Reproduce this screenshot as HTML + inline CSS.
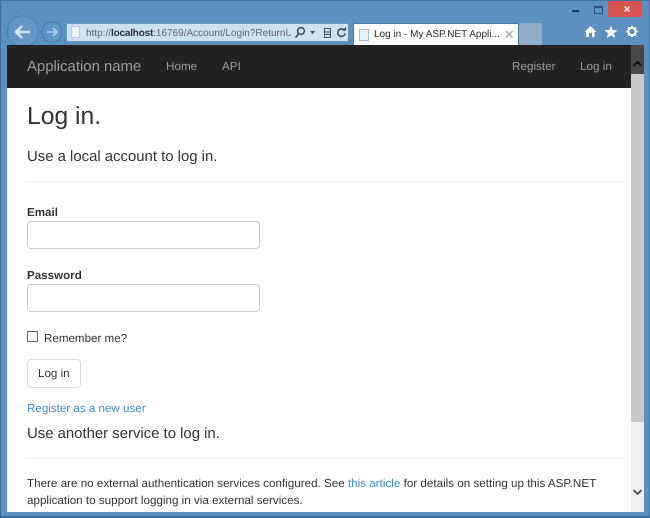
<!DOCTYPE html>
<html><head><meta charset="utf-8"><style>
html,body{margin:0;padding:0;background:#5b90bf}
body{width:650px;height:518px;overflow:hidden;position:relative;font-family:"Liberation Sans",sans-serif;color:#333}
#w{position:absolute;left:0;top:0;width:650px;height:518px;background:#5b90bf;filter:blur(.35px);text-rendering:geometricPrecision}
.a{position:absolute;white-space:nowrap;line-height:1}
.b{position:absolute}
</style></head><body><div id="w">
<div class="b" style="left:0;top:0;width:650px;height:518px;box-sizing:border-box;border:1px solid #3f6f9c;border-bottom-width:2px"></div>
<!-- close/min/max -->
<div class="b" style="left:608px;top:1px;width:34px;height:16px;background:#d6534f"></div>
<svg class="b" style="left:0;top:0" width="650" height="45">
<path d="M624.500 6.500l5 5M629.500 6.500l-5 5" stroke="#fff" stroke-width="1.500" fill="none" opacity=".9"/>
<rect x="572" y="10" width="7" height="2" fill="#1d3d5c"/>
<rect x="594.500" y="6.500" width="8" height="7" fill="none" stroke="#2c5478" stroke-width="1"/><rect x="594" y="6" width="9" height="2" fill="#2c5478"/>
<!-- back / forward -->
<circle cx="23" cy="31.500" r="15.500" fill="#6496c4" stroke="#4a82b4" stroke-width="1"/>
<path d="M16 32h14M22 26l-6 6 6 6" stroke="#d7e6f3" stroke-width="2.600" fill="none"/>
<circle cx="52" cy="32" r="10" fill="#5f93c2" stroke="#447cae" stroke-width="1"/>
<path d="M47 32h10M53 28l4 4-4 4" stroke="#b4cfe6" stroke-width="1.600" fill="none"/>
<!-- home star gear -->
<path d="M584.500 32l6-6 6 6h-2v5h-2.500v-4h-3v4H586v-5z" fill="#fff"/>
<path d="M611 25.500l1.800 4.500 4.700.3-3.600 3 1.200 4.700-4.100-2.600-4.100 2.600 1.200-4.700-3.600-3 4.700-.3z" fill="#fff"/>
<circle cx="632" cy="31.500" r="3.600" fill="none" stroke="#fff" stroke-width="2"/>
<path d="M632 25.800v2.400M632 34.800v2.400M626.300 31.500h2.400M635.300 31.500h2.400M628 27.500l1.700 1.700M634.300 33.800l1.700 1.700M636 27.500l-1.700 1.700M629.700 33.800L628 35.500" stroke="#fff" stroke-width="1.800"/>
</svg>
<!-- address bar -->
<div class="b" style="left:66px;top:23px;width:282px;height:19px;background:#cfe0ee;border:1px solid #6b9ac2;box-sizing:border-box"></div>
<div class="b" style="left:71px;top:26px;width:9px;height:12px;background:#f2f5f8;border:1px solid #b8cfe3;box-sizing:border-box"></div>
<div class="a" style="left:86px;top:29px;font-size:10px;color:#5a6672">http://<b style="color:#26323d;letter-spacing:-.2px">localhost</b>:16769/Account/Login?ReturnU</div>
<div class="b" style="left:291px;top:24px;width:57px;height:17px;background:#cfe0ee"></div>
<svg class="b" style="left:290px;top:24px" width="60" height="18">
<circle cx="11" cy="7" r="3.400" fill="none" stroke="#33404c" stroke-width="1.400"/><path d="M8.500 10l-3 3.500" stroke="#33404c" stroke-width="1.600"/>
<path d="M20 7h5l-2.500 3z" fill="#44515e"/>
<rect x="34.500" y="4.500" width="6" height="9" fill="none" stroke="#44515e"/><path d="M35 8h5M35 10.500h5" stroke="#44515e"/>
<path d="M54.500 6.500a3.700 3.700 0 1 0 .6 3" fill="none" stroke="#33404c" stroke-width="1.400"/><path d="M52.500 6.500h3.500v-3.500z" fill="#33404c"/>
</svg>
<!-- tabs -->
<div class="b" style="left:518px;top:23px;width:24px;height:22px;background:#8fadc9"></div>
<div class="b" style="left:353px;top:23px;width:166px;height:22px;background:#fff;border:1px solid #4b7aa4;border-bottom:0;box-sizing:border-box"></div>
<div class="b" style="left:359px;top:29px;width:10px;height:12px;background:#e9f0f6;border:1px solid #9fbdd8;box-sizing:border-box"></div>
<div class="a" style="left:374px;top:30px;font-size:10px;color:#2a2a2a">Log in - My ASP.NET Appli...</div>
<svg class="b" style="left:505px;top:30px" width="10" height="10"><path d="M1 1l6.500 6.500M7.500 1l-6.500 6.500" stroke="#a6abb0" stroke-width="1.500"/></svg>
<!-- page -->
<div class="b" style="left:7px;top:45px;width:637px;height:467px;background:#fff"></div>
<div class="b" style="left:7px;top:45px;width:624px;height:43px;background:#222"></div>
<div class="a" style="left:27px;top:60px;font-size:14.900px;color:#9d9d9d">Application name</div>
<div class="a" style="left:166px;top:61px;font-size:11.700px;color:#9d9d9d">Home</div>
<div class="a" style="left:222px;top:61px;font-size:11.700px;color:#9d9d9d">API</div>
<div class="a" style="left:512px;top:61px;font-size:11.700px;color:#9d9d9d">Register</div>
<div class="a" style="left:580px;top:61px;font-size:11.700px;color:#9d9d9d">Log in</div>
<!-- scrollbar -->
<div class="b" style="left:631px;top:45px;width:13px;height:467px;background:#f0f0f0"></div>
<div class="b" style="left:631px;top:45px;width:13px;height:29px;background:#484848"></div>
<div class="b" style="left:631px;top:74px;width:13px;height:348px;background:#c8c8c8"></div>
<svg class="b" style="left:631px;top:45px" width="13" height="467">
<path d="M2.500 21l4-4 4 4" fill="none" stroke="#111" stroke-width="1.800"/>
<path d="M2.500 445l4 4 4-4" fill="none" stroke="#505050" stroke-width="1.800"/>
</svg>
<!-- content -->
<div class="a" style="left:27px;top:105px;font-size:24.700px">Log in.</div>
<div class="a" style="left:27px;top:150px;font-size:14.900px">Use a local account to log in.</div>
<div class="b" style="left:27px;top:181px;width:597px;height:1px;background:#eee"></div>
<div class="a" style="left:27px;top:207px;font-size:11.600px;font-weight:bold">Email</div>
<div class="b" style="left:27px;top:221px;width:233px;height:28px;box-sizing:border-box;border:1px solid #ccc;border-radius:4px;background:#fff"></div>
<div class="a" style="left:27px;top:270px;font-size:11.600px;font-weight:bold">Password</div>
<div class="b" style="left:27px;top:284px;width:233px;height:28px;box-sizing:border-box;border:1px solid #ccc;border-radius:4px;background:#fff"></div>
<div class="b" style="left:27px;top:331px;width:11px;height:11px;box-sizing:border-box;border:1px solid #666;background:#fff"></div>
<div class="a" style="left:44px;top:333px;font-size:11.600px">Remember me?</div>
<div class="b" style="left:27px;top:359px;width:54px;height:29px;box-sizing:border-box;border:1px solid #ddd;border-radius:4px;background:#fff"></div>
<div class="a" style="left:38px;top:368px;font-size:11.600px">Log in</div>
<div class="a" style="left:27px;top:403px;font-size:11.600px;color:#428bca">Register as a new user</div>
<div class="a" style="left:27px;top:427px;font-size:14.900px">Use another service to log in.</div>
<div class="b" style="left:27px;top:458px;width:597px;height:1px;background:#eee"></div>
<div class="a" style="left:27px;top:478px;font-size:11.650px">There are no external authentication services configured. See <span style="color:#428bca">this article</span> for details on setting up this ASP.NET</div>
<div class="a" style="left:27px;top:495px;font-size:11.650px">application to support logging in via external services.</div>
</div></body></html>
